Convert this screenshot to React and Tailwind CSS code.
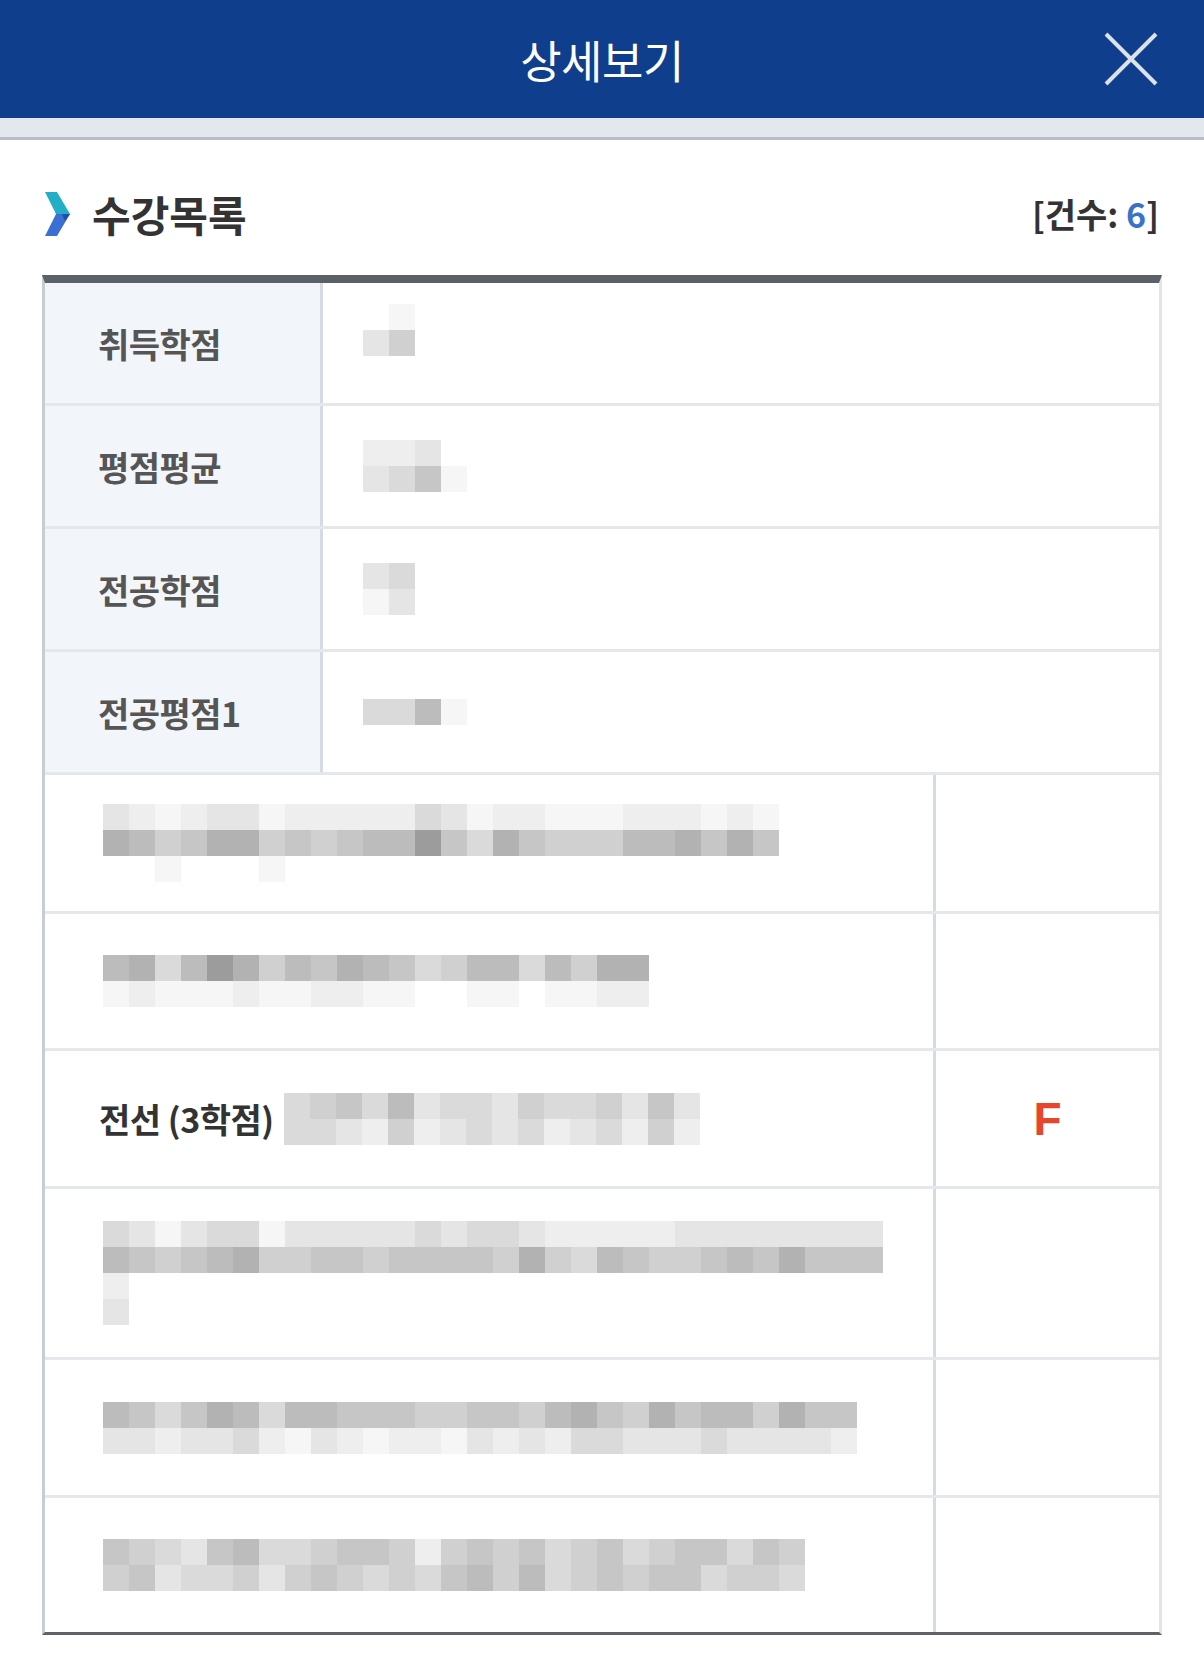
import React from 'react';

const shades = {
  '0': 'bg-transparent',
  '1': 'bg-[#f6f6f6]',
  '2': 'bg-[#eeeeee]',
  '3': 'bg-[#e5e5e5]',
  '4': 'bg-[#dadada]',
  '5': 'bg-[#d0d0d0]',
  '6': 'bg-[#c6c6c6]',
  '7': 'bg-[#bcbcbc]',
  '8': 'bg-[#b2b2b2]',
  '9': 'bg-[#9c9c9c]',
};

// 가려진 값 (모자이크)
function Mosaic({ rows }) {
  return (
    <div className="flex flex-col shrink-0">
      {rows.map((row, i) => (
        <div key={i} className="flex">
          {row.split('').map((c, j) => (
            <div key={j} className={`w-[26px] h-[26px] ${shades[c]}`} />
          ))}
        </div>
      ))}
    </div>
  );
}

const summary = [
  { label: '취득학점', mosaic: ['01', '35', '00'] },
  { label: '평점평균', mosaic: ['2230', '3461'] },
  { label: '전공학점', mosaic: ['34', '13'] },
  { label: '전공평점1', mosaic: ['4471'] },
];

const courses = [
  {
    h: 'h-[139px]',
    mosaic: [
      '32123312222243122111222121',
      '87568856567796486555778686',
      '00100010000000000000000000',
    ],
  },
  {
    h: 'h-[137px]',
    mosaic: ['784798576876457747588', '121112112211001101122'],
  },
  {
    h: 'h-[138px]',
    text: '전선 (3학점)',
    mosaic: ['4564734435445363', '4432523434234252'],
    grade: 'F',
  },
  {
    h: 'h-[171px]',
    mosaic: [
      '431344133333434432222233333333',
      '765678556656666585476556768666',
      '200000000000000000000000000000',
      '300000000000000000000000000000',
    ],
  },
  {
    h: 'h-[138px]',
    mosaic: ['76468747766655665786586775866', '33233421321221323244333433332'],
  },
  {
    h: 'h-[134px]',
    mosaic: ['654367445665256564564566465', '563445356545467574565664554'],
    last: true,
  },
];

export default function App() {
  return (
    <div className="w-[1204px] min-h-[1672px] bg-white font-['Noto_Sans_CJK_KR','Noto_Sans',sans-serif]">
      {/* 상단 헤더 */}
      <div className="h-[118px] bg-[#0f3e8c] grid grid-cols-[1fr_auto_1fr] items-center">
        <div />
        <h1 className="text-white text-[45px] font-normal tracking-[-0.5px] leading-none">상세보기</h1>
        <div className="flex justify-end pr-[46px]">
          <svg width="54" height="54" viewBox="0 0 54 54">
            <path d="M2 2 L52 52 M52 2 L2 52" stroke="#dde2ea" strokeWidth="4" fill="none" />
          </svg>
        </div>
      </div>
      <div className="h-[22px] bg-[#e3e8ee] border-b-[3px] border-[#b9bec6]" />

      <div className="px-[42px] pt-[39px]">
        {/* 제목 */}
        <div className="h-[70px] flex items-center justify-between mb-[26px]">
          <div className="flex items-center">
            <svg width="25" height="44" viewBox="0 0 25 44" className="ml-[3px]">
              <polygon points="0,0 12,0 25,22 11,22" fill="#22aec7" />
              <polygon points="11,22 25,22 12,44 0,44" fill="#3b6fd1" />
              <polygon points="17,22 25,22 20,29" fill="#1f4fa6" />
            </svg>
            <h2 className="ml-[22px] text-[42px] font-bold text-[#333] leading-none">수강목록</h2>
          </div>
          <div className="text-[34px] font-bold text-[#333] leading-none pr-[3px]">
            [건수: <span className="text-[#3a72c6]">6</span>]
          </div>
        </div>

        {/* 표 */}
        <div className="border-t-8 border-t-[#5c6167] border-l-[3px] border-l-[#c8cdd4] border-r-[3px] border-r-[#e1e5ea] border-b-[3px] border-b-[#5f6368]">
          {summary.map((r) => (
            <div key={r.label} className="h-[123px] flex border-b-[3px] border-[#e4e8ec]">
              <div className="w-[278px] shrink-0 bg-[#f2f6fa] border-r-[3px] border-[#d6dbe1] flex items-center pl-[53px]">
                <span className="text-[34px] font-bold text-[#555] tracking-[-0.5px]">{r.label}</span>
              </div>
              <div className="flex-1 flex items-center pl-[40px]">
                <Mosaic rows={r.mosaic} />
              </div>
            </div>
          ))}

          {courses.map((c, i) => (
            <div key={i} className={`${c.h} flex ${c.last ? '' : 'border-b-[3px] border-[#e4e8ec]'}`}>
              <div className="w-[891px] shrink-0 border-r-[3px] border-[#d6dbe1] flex items-center pl-[58px]">
                {c.text && (
                  <span className="-ml-[4px] text-[34px] font-bold text-[#333] tracking-[-0.5px] mr-[10px]">{c.text}</span>
                )}
                <Mosaic rows={c.mosaic} />
              </div>
              <div className="flex-1 flex items-center justify-center">
                {c.grade && (
                  <span className="font-['Liberation_Sans',sans-serif] text-[46px] font-bold text-[#e8452f] leading-none">
                    {c.grade}
                  </span>
                )}
              </div>
            </div>
          ))}
        </div>
      </div>
    </div>
  );
}
